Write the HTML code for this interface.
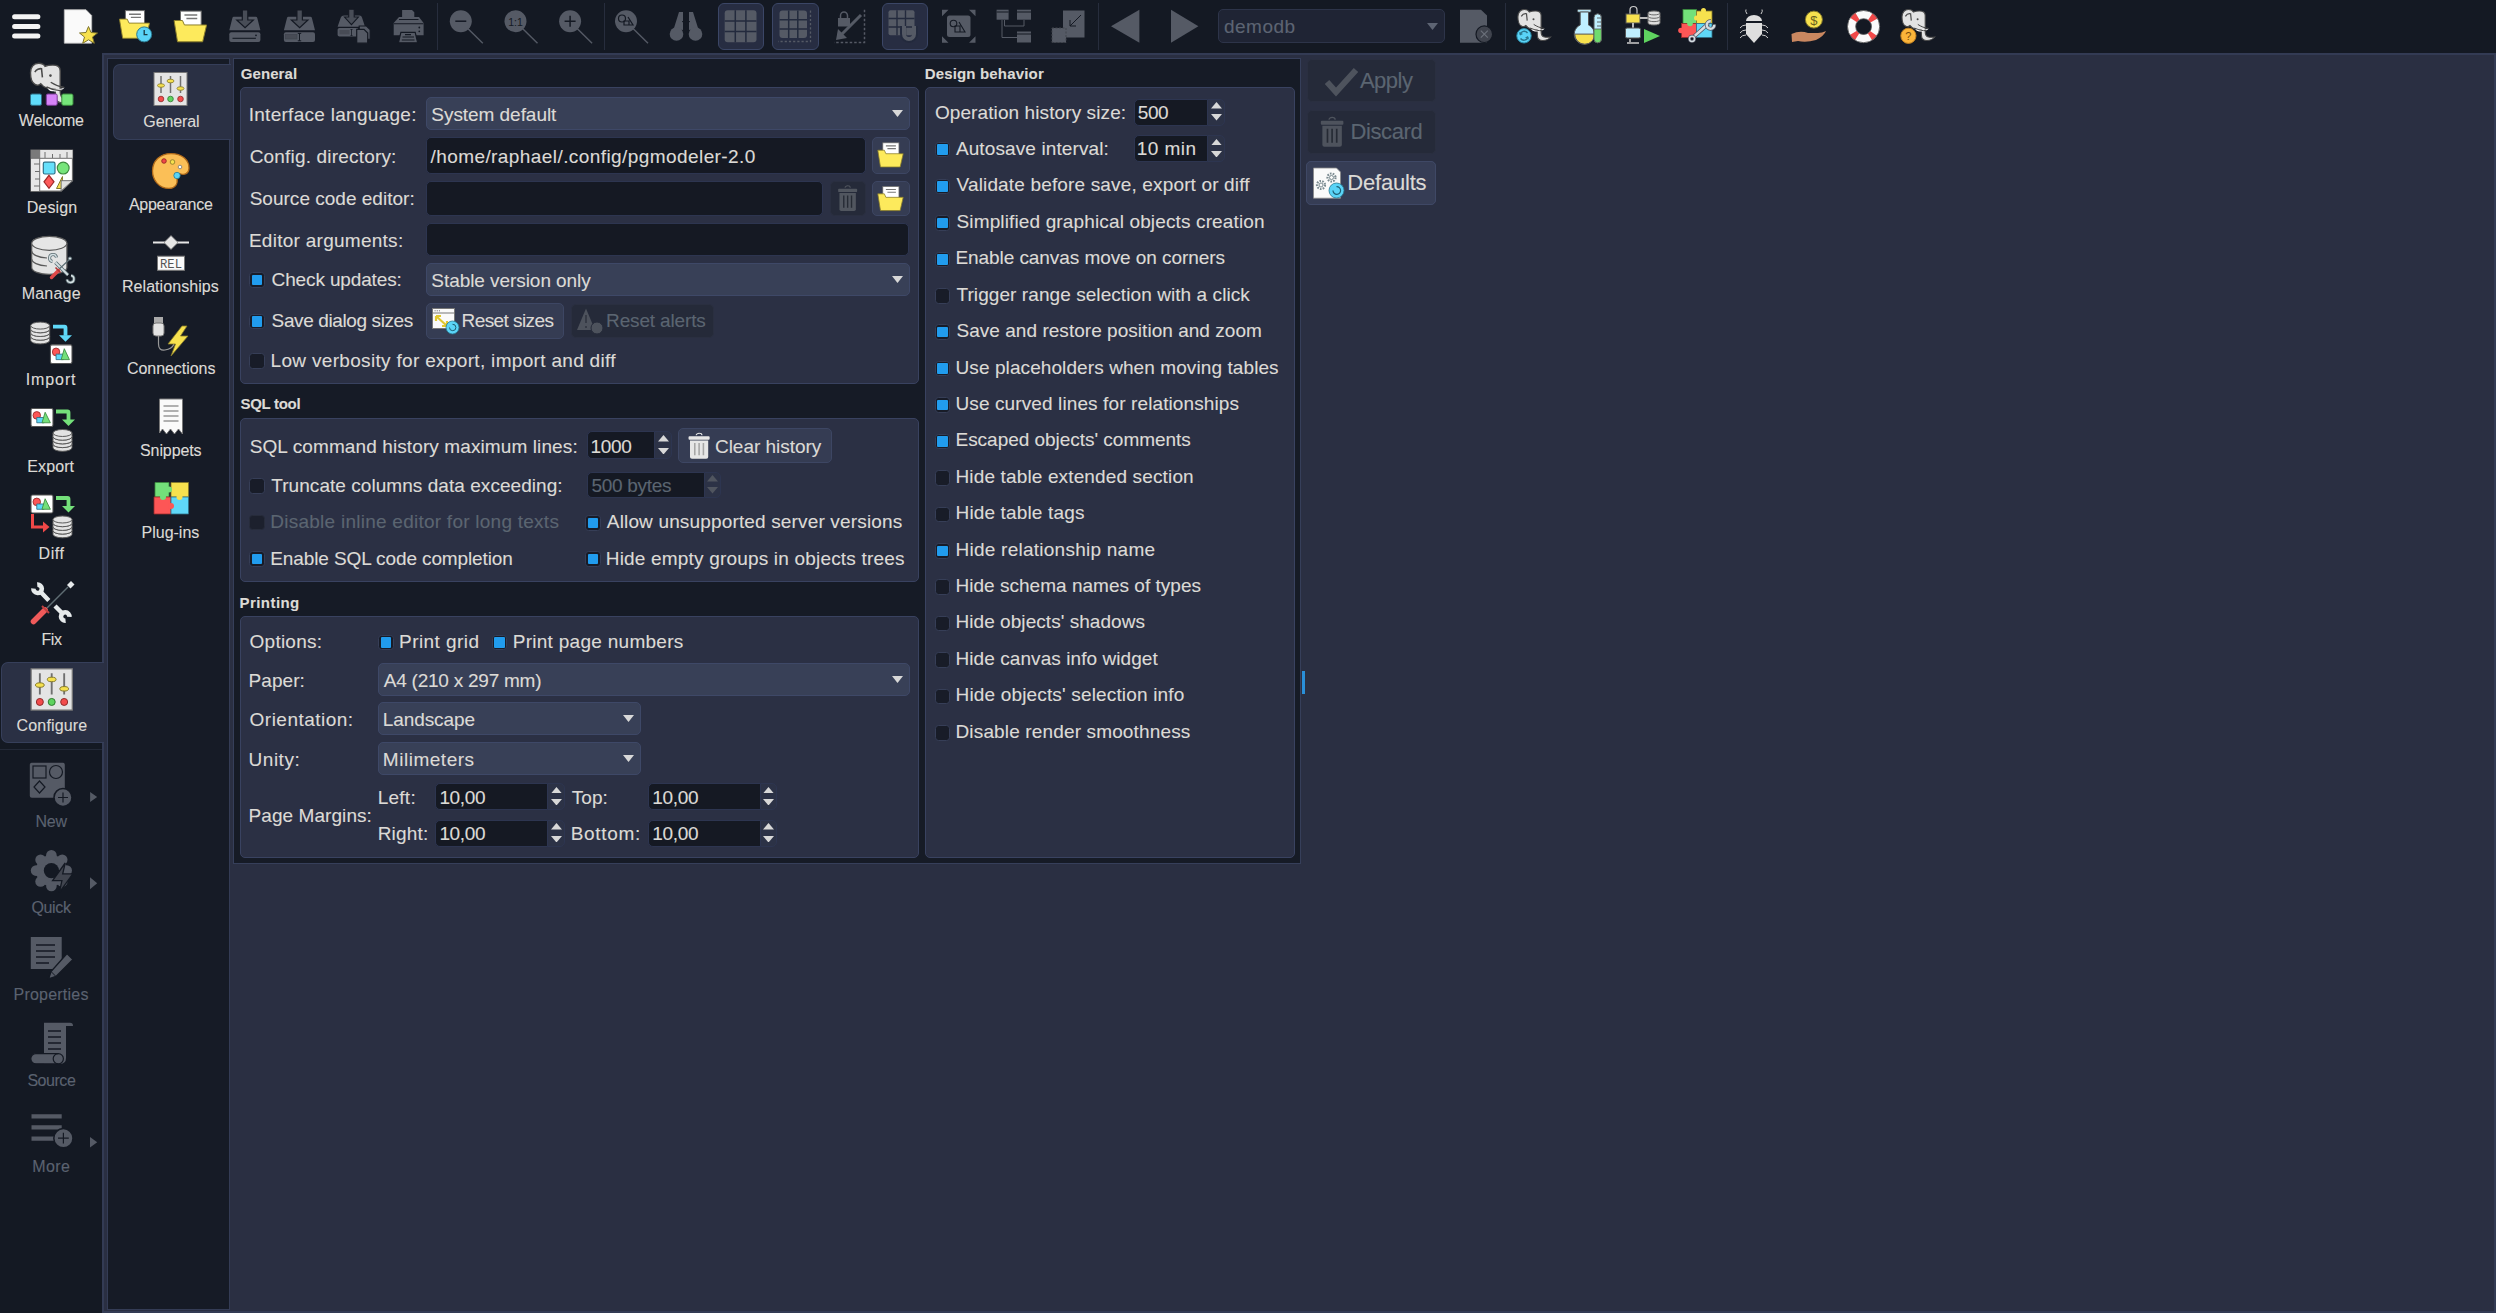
<!DOCTYPE html>
<html><head><meta charset="utf-8"><style>
html,body{margin:0;padding:0;width:2496px;height:1313px;overflow:hidden;background:#2a2f42;}
.a{position:absolute;}
.t{font-family:'Liberation Sans', sans-serif;white-space:nowrap;-webkit-text-stroke:0.12px currentColor;}
#t0{letter-spacing:0.156px;margin-left:0.00px}#t1{letter-spacing:0.138px;margin-left:0.00px}#t2{letter-spacing:-0.072px;margin-left:-1.00px}#t3{letter-spacing:0.073px;margin-left:0.00px}#t4{letter-spacing:0.035px;margin-left:0.00px}#t5{letter-spacing:0.091px;margin-left:-1.00px}#t6{letter-spacing:0.111px;margin-left:-1.00px}#t7{letter-spacing:-0.027px;margin-left:-1.00px}#t8{letter-spacing:0.141px;margin-left:-1.00px}#t9{letter-spacing:0.154px;margin-left:-1.00px}#t10{letter-spacing:0.249px;margin-left:-1.00px}#t11{letter-spacing:0.020px;margin-left:-1.00px}#t12{letter-spacing:0.052px;margin-left:-1.00px}#t13{letter-spacing:0.073px;margin-left:-1.00px}#t14{letter-spacing:0.163px;margin-left:-1.00px}#t15{letter-spacing:0.146px;margin-left:-1.00px}#t16{letter-spacing:0.481px;margin-left:0.00px}#t17{letter-spacing:0.101px;margin-left:0.00px}#t18{letter-spacing:-0.303px;margin-left:0.00px}#t19{letter-spacing:0.443px;margin-left:-1.00px}#t20{letter-spacing:0.167px;margin-left:-1.00px}#t21{letter-spacing:0.283px;margin-left:-1.00px}#t22{letter-spacing:-0.046px;margin-left:0.00px}#t23{letter-spacing:0.180px;margin-left:0.00px}#t24{letter-spacing:0.422px;margin-left:0.00px}#t25{letter-spacing:0.012px;margin-left:0.00px}#t26{letter-spacing:0.270px;margin-left:-1.00px}#t27{letter-spacing:-0.142px;margin-left:0.00px}#t28{letter-spacing:-0.058px;margin-left:0.00px}#t29{letter-spacing:-0.385px;margin-left:0.00px}#t30{letter-spacing:-0.590px;margin-left:-1.00px}#t31{letter-spacing:-0.152px;margin-left:-1.00px}#t32{letter-spacing:0.317px;margin-left:-1.00px}#t33{letter-spacing:0.105px;margin-left:0.00px}#t34{letter-spacing:-0.334px;margin-left:-1.00px}#t35{letter-spacing:-0.037px;margin-left:0.00px}#t36{letter-spacing:0.050px;margin-left:0.00px}#t37{letter-spacing:-0.312px;margin-left:0.00px}#t38{letter-spacing:0.249px;margin-left:-1.00px}#t39{letter-spacing:0.156px;margin-left:0.00px}#t40{letter-spacing:-0.113px;margin-left:-1.00px}#t41{letter-spacing:0.184px;margin-left:-1.00px}#t42{letter-spacing:0.232px;margin-left:0.00px}#t43{letter-spacing:0.427px;margin-left:-1.00px}#t44{letter-spacing:0.282px;margin-left:-1.00px}#t45{letter-spacing:0.060px;margin-left:-1.00px}#t46{letter-spacing:-0.240px;margin-left:0.00px}#t47{letter-spacing:0.478px;margin-left:0.00px}#t48{letter-spacing:-0.100px;margin-left:-1.00px}#t49{letter-spacing:0.502px;margin-left:-1.00px}#t50{letter-spacing:0.527px;margin-left:-1.00px}#t51{letter-spacing:0.064px;margin-left:-1.00px}#t52{letter-spacing:0.252px;margin-left:-1.00px}#t53{letter-spacing:-0.345px;margin-left:-1.00px}#t54{letter-spacing:0.089px;margin-left:0.00px}#t55{letter-spacing:-0.345px;margin-left:-1.00px}#t56{letter-spacing:0.189px;margin-left:-1.00px}#t57{letter-spacing:-0.345px;margin-left:-1.00px}#t58{letter-spacing:0.685px;margin-left:-1.00px}#t59{letter-spacing:-0.345px;margin-left:-1.00px}#t60{letter-spacing:0.098px;margin-left:0.00px}#t61{letter-spacing:-0.467px;margin-left:0.00px}#t62{letter-spacing:0.115px;margin-left:0.00px}#t63{letter-spacing:0.428px;margin-left:-1.00px}#t64{letter-spacing:-0.483px;margin-left:0.00px}#t65{letter-spacing:-0.406px;margin-left:-1.00px}#t66{letter-spacing:-0.201px;margin-left:-1.00px}#t67{letter-spacing:-0.215px;margin-left:0.00px}#t68{letter-spacing:0.119px;margin-left:-1.00px}#t69{letter-spacing:0.216px;margin-left:-1.00px}#t70{letter-spacing:0.880px;margin-left:-1.00px}#t71{letter-spacing:0.101px;margin-left:-1.00px}#t72{letter-spacing:0.578px;margin-left:-1.00px}#t73{letter-spacing:-0.414px;margin-left:-1.00px}#t74{letter-spacing:0.153px;margin-left:0.00px}#t75{letter-spacing:-0.227px;margin-left:-1.00px}#t76{letter-spacing:-0.350px;margin-left:0.00px}#t77{letter-spacing:0.209px;margin-left:-1.00px}#t78{letter-spacing:-0.459px;margin-left:0.00px}#t79{letter-spacing:0.382px;margin-left:-1.00px}#t80{letter-spacing:-0.111px;margin-left:0.00px}#t81{letter-spacing:-0.255px;margin-left:0.00px}#t82{letter-spacing:0.054px;margin-left:-1.00px}#t83{letter-spacing:-0.055px;margin-left:0.00px}#t84{letter-spacing:-0.095px;margin-left:0.00px}#t85{letter-spacing:-0.015px;margin-left:-1.00px}
</style></head><body>
<div class="a" style="left:0px;top:0px;width:2496px;height:53px;background:#141923;"></div>
<div class="a" style="left:0px;top:53px;width:102px;height:1260px;background:#141923;"></div>
<div class="a" style="left:102px;top:53px;width:2394px;height:1260px;background:#2a2f42;border:2px solid #333b54;box-sizing:border-box;"></div>
<div class="a" style="left:107px;top:58px;width:123px;height:1252px;background:#161b26;border:1px solid #343c55;box-sizing:border-box;"></div>
<div class="a" style="left:113px;top:64px;width:118px;height:76px;background:#2a3044;border:1px solid #353e59;box-sizing:border-box;border-radius:7px;border-top-right-radius:0;border-bottom-right-radius:0;border-right:none;"></div>
<div class="a" style="left:233px;top:58px;width:1068px;height:806px;background:#161b26;border:1px solid #363f5a;box-sizing:border-box;"></div>
<div class="a" style="left:240px;top:87px;width:679px;height:297px;background:#2b3044;border:1px solid #394260;box-sizing:border-box;border-radius:5px;"></div>
<div class="a" style="left:240px;top:418px;width:679px;height:164px;background:#2b3044;border:1px solid #394260;box-sizing:border-box;border-radius:5px;"></div>
<div class="a" style="left:240px;top:616px;width:679px;height:242px;background:#2b3044;border:1px solid #394260;box-sizing:border-box;border-radius:5px;"></div>
<div class="a" style="left:925px;top:87px;width:370px;height:771px;background:#2b3044;border:1px solid #394260;box-sizing:border-box;border-radius:5px;"></div>
<div class="a" style="left:1302px;top:671px;width:3px;height:23px;background:#2a8fd8;"></div>
<div class="a" style="left:426px;top:97px;width:484px;height:33px;background:#384057;border:1px solid #3e4867;box-sizing:border-box;border-radius:5px;"></div>
<svg class="a" style="left:891.5px;top:110.0px;" width="11" height="7" viewBox="0 0 11 7"><path d="M0 0H11L5.5 7Z" fill="#d8d8d8"/></svg>
<div class="a" style="left:426px;top:137px;width:440px;height:36.5px;background:#151923;border:1px solid #2d3550;box-sizing:border-box;border-radius:5px;"></div>
<div class="a" style="left:872px;top:137px;width:38px;height:36.5px;background:#353c53;border:1px solid #3d4663;box-sizing:border-box;border-radius:5px;"></div>
<div class="a" style="left:426px;top:180.5px;width:397px;height:35.80000000000001px;background:#151923;border:1px solid #2d3550;box-sizing:border-box;border-radius:5px;"></div>
<div class="a" style="left:830px;top:180.5px;width:35.5px;height:35.80000000000001px;background:#252a39;border:1px solid #2a2f40;box-sizing:border-box;border-radius:5px;"></div>
<div class="a" style="left:872px;top:180.5px;width:38px;height:35.80000000000001px;background:#353c53;border:1px solid #3d4663;box-sizing:border-box;border-radius:5px;"></div>
<div class="a" style="left:426px;top:223.4px;width:483px;height:32.99999999999997px;background:#151923;border:1px solid #2d3550;box-sizing:border-box;border-radius:5px;"></div>
<div class="a" style="left:426px;top:263px;width:484px;height:33.39999999999998px;background:#384057;border:1px solid #3e4867;box-sizing:border-box;border-radius:5px;"></div>
<svg class="a" style="left:891.5px;top:276.2px;" width="11" height="7" viewBox="0 0 11 7"><path d="M0 0H11L5.5 7Z" fill="#d8d8d8"/></svg>
<div class="a" style="left:426px;top:303px;width:138px;height:36px;background:#353c53;border:1px solid #3d4663;box-sizing:border-box;border-radius:5px;"></div>
<div class="a" style="left:571px;top:304px;width:143px;height:34px;background:#252a39;border:1px solid #2a2f40;box-sizing:border-box;border-radius:5px;"></div>
<div class="a" style="left:249.29999999999998px;top:272.1px;width:15.499999999999972px;height:15.5px;background:#181c28;border:1px solid #363e57;box-sizing:border-box;border-radius:3.5px;"></div>
<div class="a" style="left:251.79999999999998px;top:274.6px;width:10.499999999999972px;height:10.5px;background:#219cee;border-radius:1px;"></div>
<div class="a" style="left:249.29999999999998px;top:313.90000000000003px;width:15.499999999999972px;height:15.5px;background:#181c28;border:1px solid #363e57;box-sizing:border-box;border-radius:3.5px;"></div>
<div class="a" style="left:251.79999999999998px;top:316.40000000000003px;width:10.499999999999972px;height:10.5px;background:#219cee;border-radius:1px;"></div>
<div class="a" style="left:249.29999999999998px;top:353.40000000000003px;width:15.499999999999972px;height:15.5px;background:#181c28;border:1px solid #363e57;box-sizing:border-box;border-radius:3.5px;"></div>
<div class="a" style="left:586.6px;top:431.3px;width:85.10000000000002px;height:27.899999999999977px;background:#2c3246;border:1px solid #2d3550;box-sizing:border-box;border-radius:5px;"></div>
<div class="a" style="left:586.6px;top:431.3px;width:68.39999999999998px;height:27.899999999999977px;background:#151923;border:1px solid #2d3550;box-sizing:border-box;border-radius:5px;border-top-right-radius:0;border-bottom-right-radius:0;"></div>
<svg class="a" style="left:657.85px;top:435.25px;" width="11" height="6.5" viewBox="0 0 11 6.5"><path d="M0 6.5H11L5.5 0Z" fill="#d8d8d8"/></svg>
<svg class="a" style="left:657.85px;top:447.55px;" width="11" height="6.5" viewBox="0 0 11 6.5"><path d="M0 0H11L5.5 6.5Z" fill="#d8d8d8"/></svg>
<div class="a" style="left:678.2px;top:428.4px;width:154.29999999999995px;height:34.900000000000034px;background:#353c53;border:1px solid #3d4663;box-sizing:border-box;border-radius:5px;"></div>
<div class="a" style="left:587px;top:472.2px;width:133.70000000000005px;height:25.69999999999999px;background:#2c3246;border:1px solid #2d3550;box-sizing:border-box;border-radius:5px;"></div>
<div class="a" style="left:587px;top:472.2px;width:118px;height:25.69999999999999px;background:#151923;border:1px solid #2d3550;box-sizing:border-box;border-radius:5px;border-top-right-radius:0;border-bottom-right-radius:0;"></div>
<svg class="a" style="left:707.35px;top:475.04999999999995px;" width="11" height="6.5" viewBox="0 0 11 6.5"><path d="M0 6.5H11L5.5 0Z" fill="#50555f"/></svg>
<svg class="a" style="left:707.35px;top:487.34999999999997px;" width="11" height="6.5" viewBox="0 0 11 6.5"><path d="M0 0H11L5.5 6.5Z" fill="#50555f"/></svg>
<div class="a" style="left:249.39999999999998px;top:478.3px;width:15.5px;height:15.5px;background:#181c28;border:1px solid #363e57;box-sizing:border-box;border-radius:3.5px;"></div>
<div class="a" style="left:249.39999999999998px;top:514.8px;width:15.5px;height:15.5px;background:#1c202d;border:1px solid #272c3b;box-sizing:border-box;border-radius:3.5px;"></div>
<div class="a" style="left:249.39999999999998px;top:551.4px;width:15.5px;height:15.5px;background:#181c28;border:1px solid #363e57;box-sizing:border-box;border-radius:3.5px;"></div>
<div class="a" style="left:251.89999999999998px;top:553.9px;width:10.5px;height:10.5px;background:#219cee;border-radius:1px;"></div>
<div class="a" style="left:585.3000000000001px;top:515.0px;width:15.5px;height:15.5px;background:#181c28;border:1px solid #363e57;box-sizing:border-box;border-radius:3.5px;"></div>
<div class="a" style="left:587.8000000000001px;top:517.5px;width:10.5px;height:10.5px;background:#219cee;border-radius:1px;"></div>
<div class="a" style="left:585.3000000000001px;top:551.4px;width:15.5px;height:15.5px;background:#181c28;border:1px solid #363e57;box-sizing:border-box;border-radius:3.5px;"></div>
<div class="a" style="left:587.8000000000001px;top:553.9px;width:10.5px;height:10.5px;background:#219cee;border-radius:1px;"></div>
<div class="a" style="left:378.3px;top:634.5999999999999px;width:15.5px;height:15.5px;background:#181c28;border:1px solid #363e57;box-sizing:border-box;border-radius:3.5px;"></div>
<div class="a" style="left:380.8px;top:637.0999999999999px;width:10.5px;height:10.5px;background:#219cee;border-radius:1px;"></div>
<div class="a" style="left:491.9px;top:634.5999999999999px;width:15.5px;height:15.5px;background:#181c28;border:1px solid #363e57;box-sizing:border-box;border-radius:3.5px;"></div>
<div class="a" style="left:494.4px;top:637.0999999999999px;width:10.5px;height:10.5px;background:#219cee;border-radius:1px;"></div>
<div class="a" style="left:378px;top:662.5px;width:532px;height:33.299999999999955px;background:#384057;border:1px solid #3e4867;box-sizing:border-box;border-radius:5px;"></div>
<svg class="a" style="left:891.5px;top:675.65px;" width="11" height="7" viewBox="0 0 11 7"><path d="M0 0H11L5.5 7Z" fill="#d8d8d8"/></svg>
<div class="a" style="left:378px;top:702.2px;width:263px;height:33.299999999999955px;background:#384057;border:1px solid #3e4867;box-sizing:border-box;border-radius:5px;"></div>
<svg class="a" style="left:622.5px;top:715.35px;" width="11" height="7" viewBox="0 0 11 7"><path d="M0 0H11L5.5 7Z" fill="#d8d8d8"/></svg>
<div class="a" style="left:378px;top:742.2px;width:263px;height:33.299999999999955px;background:#384057;border:1px solid #3e4867;box-sizing:border-box;border-radius:5px;"></div>
<svg class="a" style="left:622.5px;top:755.35px;" width="11" height="7" viewBox="0 0 11 7"><path d="M0 0H11L5.5 7Z" fill="#d8d8d8"/></svg>
<div class="a" style="left:435px;top:783px;width:129.5px;height:27.299999999999955px;background:#2c3246;border:1px solid #2d3550;box-sizing:border-box;border-radius:5px;"></div>
<div class="a" style="left:435px;top:783px;width:112.60000000000002px;height:27.299999999999955px;background:#151923;border:1px solid #2d3550;box-sizing:border-box;border-radius:5px;border-top-right-radius:0;border-bottom-right-radius:0;"></div>
<svg class="a" style="left:550.55px;top:786.65px;" width="11" height="6.5" viewBox="0 0 11 6.5"><path d="M0 6.5H11L5.5 0Z" fill="#d8d8d8"/></svg>
<svg class="a" style="left:550.55px;top:798.9499999999999px;" width="11" height="6.5" viewBox="0 0 11 6.5"><path d="M0 0H11L5.5 6.5Z" fill="#d8d8d8"/></svg>
<div class="a" style="left:648px;top:783px;width:129px;height:27.299999999999955px;background:#2c3246;border:1px solid #2d3550;box-sizing:border-box;border-radius:5px;"></div>
<div class="a" style="left:648px;top:783px;width:112.5px;height:27.299999999999955px;background:#151923;border:1px solid #2d3550;box-sizing:border-box;border-radius:5px;border-top-right-radius:0;border-bottom-right-radius:0;"></div>
<svg class="a" style="left:763.25px;top:786.65px;" width="11" height="6.5" viewBox="0 0 11 6.5"><path d="M0 6.5H11L5.5 0Z" fill="#d8d8d8"/></svg>
<svg class="a" style="left:763.25px;top:798.9499999999999px;" width="11" height="6.5" viewBox="0 0 11 6.5"><path d="M0 0H11L5.5 6.5Z" fill="#d8d8d8"/></svg>
<div class="a" style="left:435px;top:819.6px;width:129.5px;height:27.399999999999977px;background:#2c3246;border:1px solid #2d3550;box-sizing:border-box;border-radius:5px;"></div>
<div class="a" style="left:435px;top:819.6px;width:112.60000000000002px;height:27.399999999999977px;background:#151923;border:1px solid #2d3550;box-sizing:border-box;border-radius:5px;border-top-right-radius:0;border-bottom-right-radius:0;"></div>
<svg class="a" style="left:550.55px;top:823.3px;" width="11" height="6.5" viewBox="0 0 11 6.5"><path d="M0 6.5H11L5.5 0Z" fill="#d8d8d8"/></svg>
<svg class="a" style="left:550.55px;top:835.5999999999999px;" width="11" height="6.5" viewBox="0 0 11 6.5"><path d="M0 0H11L5.5 6.5Z" fill="#d8d8d8"/></svg>
<div class="a" style="left:648px;top:819.6px;width:129px;height:27.399999999999977px;background:#2c3246;border:1px solid #2d3550;box-sizing:border-box;border-radius:5px;"></div>
<div class="a" style="left:648px;top:819.6px;width:112.5px;height:27.399999999999977px;background:#151923;border:1px solid #2d3550;box-sizing:border-box;border-radius:5px;border-top-right-radius:0;border-bottom-right-radius:0;"></div>
<svg class="a" style="left:763.25px;top:823.3px;" width="11" height="6.5" viewBox="0 0 11 6.5"><path d="M0 6.5H11L5.5 0Z" fill="#d8d8d8"/></svg>
<svg class="a" style="left:763.25px;top:835.5999999999999px;" width="11" height="6.5" viewBox="0 0 11 6.5"><path d="M0 0H11L5.5 6.5Z" fill="#d8d8d8"/></svg>
<div class="a" style="left:1133.7px;top:98.6px;width:91.39999999999986px;height:27.0px;background:#2c3246;border:1px solid #2d3550;box-sizing:border-box;border-radius:5px;"></div>
<div class="a" style="left:1133.7px;top:98.6px;width:74.70000000000005px;height:27.0px;background:#151923;border:1px solid #2d3550;box-sizing:border-box;border-radius:5px;border-top-right-radius:0;border-bottom-right-radius:0;"></div>
<svg class="a" style="left:1211.25px;top:102.1px;" width="11" height="6.5" viewBox="0 0 11 6.5"><path d="M0 6.5H11L5.5 0Z" fill="#d8d8d8"/></svg>
<svg class="a" style="left:1211.25px;top:114.39999999999999px;" width="11" height="6.5" viewBox="0 0 11 6.5"><path d="M0 0H11L5.5 6.5Z" fill="#d8d8d8"/></svg>
<div class="a" style="left:1133.7px;top:134.8px;width:91.39999999999986px;height:27.399999999999977px;background:#2c3246;border:1px solid #2d3550;box-sizing:border-box;border-radius:5px;"></div>
<div class="a" style="left:1133.7px;top:134.8px;width:74.70000000000005px;height:27.399999999999977px;background:#151923;border:1px solid #2d3550;box-sizing:border-box;border-radius:5px;border-top-right-radius:0;border-bottom-right-radius:0;"></div>
<svg class="a" style="left:1211.25px;top:138.5px;" width="11" height="6.5" viewBox="0 0 11 6.5"><path d="M0 6.5H11L5.5 0Z" fill="#d8d8d8"/></svg>
<svg class="a" style="left:1211.25px;top:150.8px;" width="11" height="6.5" viewBox="0 0 11 6.5"><path d="M0 0H11L5.5 6.5Z" fill="#d8d8d8"/></svg>
<div class="a" style="left:934.6px;top:141.8px;width:15.5px;height:15.5px;background:#181c28;border:1px solid #363e57;box-sizing:border-box;border-radius:3.5px;"></div>
<div class="a" style="left:937.1px;top:144.3px;width:10.5px;height:10.5px;background:#219cee;border-radius:1px;"></div>
<div class="a" style="left:934.7px;top:178.8px;width:15.5px;height:15.5px;background:#181c28;border:1px solid #363e57;box-sizing:border-box;border-radius:3.5px;"></div>
<div class="a" style="left:937.2px;top:181.3px;width:10.5px;height:10.5px;background:#219cee;border-radius:1px;"></div>
<div class="a t" id="t0" style="left:956.5px;top:175.4px;font-size:19px;line-height:19px;color:#dcdad6;">Validate before save, export or diff</div>
<div class="a" style="left:934.7px;top:215.22000000000003px;width:15.5px;height:15.5px;background:#181c28;border:1px solid #363e57;box-sizing:border-box;border-radius:3.5px;"></div>
<div class="a" style="left:937.2px;top:217.72000000000003px;width:10.5px;height:10.5px;background:#219cee;border-radius:1px;"></div>
<div class="a t" id="t1" style="left:956.5px;top:211.82px;font-size:19px;line-height:19px;color:#dcdad6;">Simplified graphical objects creation</div>
<div class="a" style="left:934.7px;top:251.64000000000001px;width:15.5px;height:15.499999999999972px;background:#181c28;border:1px solid #363e57;box-sizing:border-box;border-radius:3.5px;"></div>
<div class="a" style="left:937.2px;top:254.14000000000001px;width:10.5px;height:10.499999999999972px;background:#219cee;border-radius:1px;"></div>
<div class="a t" id="t2" style="left:956.5px;top:248.24px;font-size:19px;line-height:19px;color:#dcdad6;">Enable canvas move on corners</div>
<div class="a" style="left:934.7px;top:288.06px;width:15.5px;height:15.5px;background:#181c28;border:1px solid #363e57;box-sizing:border-box;border-radius:3.5px;"></div>
<div class="a t" id="t3" style="left:956.5px;top:284.66px;font-size:19px;line-height:19px;color:#dcdad6;">Trigger range selection with a click</div>
<div class="a" style="left:934.7px;top:324.48px;width:15.5px;height:15.5px;background:#181c28;border:1px solid #363e57;box-sizing:border-box;border-radius:3.5px;"></div>
<div class="a" style="left:937.2px;top:326.98px;width:10.5px;height:10.5px;background:#219cee;border-radius:1px;"></div>
<div class="a t" id="t4" style="left:956.5px;top:321.08000000000004px;font-size:19px;line-height:19px;color:#dcdad6;">Save and restore position and zoom</div>
<div class="a" style="left:934.7px;top:360.90000000000003px;width:15.5px;height:15.5px;background:#181c28;border:1px solid #363e57;box-sizing:border-box;border-radius:3.5px;"></div>
<div class="a" style="left:937.2px;top:363.40000000000003px;width:10.5px;height:10.5px;background:#219cee;border-radius:1px;"></div>
<div class="a t" id="t5" style="left:956.5px;top:357.5px;font-size:19px;line-height:19px;color:#dcdad6;">Use placeholders when moving tables</div>
<div class="a" style="left:934.7px;top:397.32px;width:15.5px;height:15.5px;background:#181c28;border:1px solid #363e57;box-sizing:border-box;border-radius:3.5px;"></div>
<div class="a" style="left:937.2px;top:399.82px;width:10.5px;height:10.5px;background:#219cee;border-radius:1px;"></div>
<div class="a t" id="t6" style="left:956.5px;top:393.92px;font-size:19px;line-height:19px;color:#dcdad6;">Use curved lines for relationships</div>
<div class="a" style="left:934.7px;top:433.74px;width:15.5px;height:15.5px;background:#181c28;border:1px solid #363e57;box-sizing:border-box;border-radius:3.5px;"></div>
<div class="a" style="left:937.2px;top:436.24px;width:10.5px;height:10.5px;background:#219cee;border-radius:1px;"></div>
<div class="a t" id="t7" style="left:956.5px;top:430.34000000000003px;font-size:19px;line-height:19px;color:#dcdad6;">Escaped objects&#39; comments</div>
<div class="a" style="left:934.7px;top:470.16px;width:15.5px;height:15.5px;background:#181c28;border:1px solid #363e57;box-sizing:border-box;border-radius:3.5px;"></div>
<div class="a t" id="t8" style="left:956.5px;top:466.76px;font-size:19px;line-height:19px;color:#dcdad6;">Hide table extended section</div>
<div class="a" style="left:934.7px;top:506.58000000000004px;width:15.5px;height:15.5px;background:#181c28;border:1px solid #363e57;box-sizing:border-box;border-radius:3.5px;"></div>
<div class="a t" id="t9" style="left:956.5px;top:503.18000000000006px;font-size:19px;line-height:19px;color:#dcdad6;">Hide table tags</div>
<div class="a" style="left:934.7px;top:543.0px;width:15.5px;height:15.5px;background:#181c28;border:1px solid #363e57;box-sizing:border-box;border-radius:3.5px;"></div>
<div class="a" style="left:937.2px;top:545.5px;width:10.5px;height:10.5px;background:#219cee;border-radius:1px;"></div>
<div class="a t" id="t10" style="left:956.5px;top:539.6px;font-size:19px;line-height:19px;color:#dcdad6;">Hide relationship name</div>
<div class="a" style="left:934.7px;top:579.42px;width:15.5px;height:15.5px;background:#181c28;border:1px solid #363e57;box-sizing:border-box;border-radius:3.5px;"></div>
<div class="a t" id="t11" style="left:956.5px;top:576.02px;font-size:19px;line-height:19px;color:#dcdad6;">Hide schema names of types</div>
<div class="a" style="left:934.7px;top:615.8399999999999px;width:15.5px;height:15.5px;background:#181c28;border:1px solid #363e57;box-sizing:border-box;border-radius:3.5px;"></div>
<div class="a t" id="t12" style="left:956.5px;top:612.44px;font-size:19px;line-height:19px;color:#dcdad6;">Hide objects&#39; shadows</div>
<div class="a" style="left:934.7px;top:652.26px;width:15.5px;height:15.5px;background:#181c28;border:1px solid #363e57;box-sizing:border-box;border-radius:3.5px;"></div>
<div class="a t" id="t13" style="left:956.5px;top:648.86px;font-size:19px;line-height:19px;color:#dcdad6;">Hide canvas info widget</div>
<div class="a" style="left:934.7px;top:688.68px;width:15.5px;height:15.5px;background:#181c28;border:1px solid #363e57;box-sizing:border-box;border-radius:3.5px;"></div>
<div class="a t" id="t14" style="left:956.5px;top:685.28px;font-size:19px;line-height:19px;color:#dcdad6;">Hide objects&#39; selection info</div>
<div class="a" style="left:934.7px;top:725.1px;width:15.5px;height:15.5px;background:#181c28;border:1px solid #363e57;box-sizing:border-box;border-radius:3.5px;"></div>
<div class="a t" id="t15" style="left:956.5px;top:721.7px;font-size:19px;line-height:19px;color:#dcdad6;">Disable render smoothness</div>
<div class="a" style="left:1217.6px;top:9.2px;width:227.10000000000014px;height:34.0px;background:#1f2434;border:1px solid #2d3449;box-sizing:border-box;border-radius:5px;"></div>
<svg class="a" style="left:1426.5px;top:22.6px;" width="11" height="7" viewBox="0 0 11 7"><path d="M0 0H11L5.5 7Z" fill="#5d6473"/></svg>
<div class="a t" id="t16" style="left:1224px;top:17.1px;font-size:19px;line-height:19px;color:#5d6473;">demodb</div>
<div class="a" style="left:718.2px;top:3.2px;width:45.799999999999955px;height:46.5px;background:#272d42;border:1px solid #3b4666;box-sizing:border-box;border-radius:6px;"></div>
<div class="a" style="left:772.3px;top:3.2px;width:46.40000000000009px;height:46.5px;background:#272d42;border:1px solid #3b4666;box-sizing:border-box;border-radius:6px;"></div>
<div class="a" style="left:882px;top:3.2px;width:45.89999999999998px;height:46.5px;background:#272d42;border:1px solid #3b4666;box-sizing:border-box;border-radius:6px;"></div>
<div class="a" style="left:437px;top:3px;width:1px;height:47px;background:#272d3d;"></div>
<div class="a" style="left:603.5px;top:3px;width:1.0px;height:47px;background:#272d3d;"></div>
<div class="a" style="left:1097.5px;top:3px;width:1.0px;height:47px;background:#272d3d;"></div>
<div class="a" style="left:1505.3px;top:3px;width:1.0px;height:47px;background:#272d3d;"></div>
<div class="a" style="left:1726.9px;top:3px;width:1.0px;height:47px;background:#272d3d;"></div>
<div class="a" style="left:1307px;top:59px;width:129px;height:43.400000000000006px;background:#252a39;border:1px solid #2a2f40;box-sizing:border-box;border-radius:5px;"></div>
<div class="a" style="left:1307px;top:110.2px;width:129px;height:43.39999999999999px;background:#252a39;border:1px solid #2a2f40;box-sizing:border-box;border-radius:5px;"></div>
<div class="a" style="left:1306.2px;top:160.7px;width:130.0999999999999px;height:44.60000000000002px;background:#353c53;border:1px solid #3d4663;box-sizing:border-box;border-radius:5px;"></div>
<div class="a" style="left:1306.2px;top:160.7px;width:130.0999999999999px;height:44.60000000000002px;background:#363d55;border:1px solid #3f4865;box-sizing:border-box;border-radius:5px;"></div>
<div class="a" style="left:1px;top:661.6px;width:103px;height:81.69999999999993px;background:#2a3044;border:1px solid #363f5a;box-sizing:border-box;border-radius:7px;border-top-right-radius:0;border-bottom-right-radius:0;border-right:none;"></div>
<div class="a" style="left:0px;top:748.5px;width:102px;height:1.2999999999999545px;background:#232937;"></div>
<div class="a t" id="t17" style="left:240.7px;top:66px;font-size:15px;line-height:15px;color:#dcdad6;font-weight:bold;">General</div>
<div class="a t" id="t18" style="left:240.5px;top:396.3px;font-size:15px;line-height:15px;color:#dcdad6;font-weight:bold;">SQL tool</div>
<div class="a t" id="t19" style="left:240.5px;top:595px;font-size:15px;line-height:15px;color:#dcdad6;font-weight:bold;">Printing</div>
<div class="a t" id="t20" style="left:925.7px;top:66px;font-size:15px;line-height:15px;color:#dcdad6;font-weight:bold;">Design behavior</div>
<div class="a t" id="t21" style="left:249.7px;top:105.2px;font-size:19px;line-height:19px;color:#dcdad6;">Interface language:</div>
<div class="a t" id="t22" style="left:431.3px;top:105.2px;font-size:19px;line-height:19px;color:#dcdad6;">System default</div>
<div class="a t" id="t23" style="left:249.7px;top:146.5px;font-size:19px;line-height:19px;color:#dcdad6;">Config. directory:</div>
<div class="a t" id="t24" style="left:430.5px;top:146.5px;font-size:19px;line-height:19px;color:#dcdad6;">/home/raphael/.config/pgmodeler-2.0</div>
<div class="a t" id="t25" style="left:249.7px;top:189.1px;font-size:19px;line-height:19px;color:#dcdad6;">Source code editor:</div>
<div class="a t" id="t26" style="left:249.9px;top:231px;font-size:19px;line-height:19px;color:#dcdad6;">Editor arguments:</div>
<div class="a t" id="t27" style="left:271.6px;top:270px;font-size:19px;line-height:19px;color:#dcdad6;">Check updates:</div>
<div class="a t" id="t28" style="left:431.3px;top:270.5px;font-size:19px;line-height:19px;color:#dcdad6;">Stable version only</div>
<div class="a t" id="t29" style="left:271.6px;top:311px;font-size:19px;line-height:19px;color:#dcdad6;">Save dialog sizes</div>
<div class="a t" id="t30" style="left:462.6px;top:311.4px;font-size:19px;line-height:19px;color:#dcdad6;">Reset sizes</div>
<div class="a t" id="t31" style="left:607.1px;top:311.4px;font-size:19px;line-height:19px;color:#5b6571;">Reset alerts</div>
<div class="a t" id="t32" style="left:271.6px;top:351.2px;font-size:19px;line-height:19px;color:#dcdad6;">Low verbosity for export, import and diff</div>
<div class="a t" id="t33" style="left:249.7px;top:436.8px;font-size:19px;line-height:19px;color:#dcdad6;">SQL command history maximum lines:</div>
<div class="a t" id="t34" style="left:591.6px;top:437.2px;font-size:19px;line-height:19px;color:#dcdad6;">1000</div>
<div class="a t" id="t35" style="left:715px;top:437.2px;font-size:19px;line-height:19px;color:#dcdad6;">Clear history</div>
<div class="a t" id="t36" style="left:271.3px;top:476.2px;font-size:19px;line-height:19px;color:#dcdad6;">Truncate columns data exceeding:</div>
<div class="a t" id="t37" style="left:591.6px;top:476.1px;font-size:19px;line-height:19px;color:#5b6571;">500 bytes</div>
<div class="a t" id="t38" style="left:271.3px;top:512.3px;font-size:19px;line-height:19px;color:#5b6571;">Disable inline editor for long texts</div>
<div class="a t" id="t39" style="left:606.8px;top:512.2px;font-size:19px;line-height:19px;color:#dcdad6;">Allow unsupported server versions</div>
<div class="a t" id="t40" style="left:271.3px;top:549px;font-size:19px;line-height:19px;color:#dcdad6;">Enable SQL code completion</div>
<div class="a t" id="t41" style="left:606.8px;top:548.7px;font-size:19px;line-height:19px;color:#dcdad6;">Hide empty groups in objects trees</div>
<div class="a t" id="t42" style="left:249.6px;top:632.1px;font-size:19px;line-height:19px;color:#dcdad6;">Options:</div>
<div class="a t" id="t43" style="left:400.1px;top:632.1px;font-size:19px;line-height:19px;color:#dcdad6;">Print grid</div>
<div class="a t" id="t44" style="left:513.7px;top:632.1px;font-size:19px;line-height:19px;color:#dcdad6;">Print page numbers</div>
<div class="a t" id="t45" style="left:249.6px;top:670.7px;font-size:19px;line-height:19px;color:#dcdad6;">Paper:</div>
<div class="a t" id="t46" style="left:383.8px;top:670.7px;font-size:19px;line-height:19px;color:#dcdad6;">A4 (210 x 297 mm)</div>
<div class="a t" id="t47" style="left:249.6px;top:710.1px;font-size:19px;line-height:19px;color:#dcdad6;">Orientation:</div>
<div class="a t" id="t48" style="left:383.8px;top:710.1px;font-size:19px;line-height:19px;color:#dcdad6;">Landscape</div>
<div class="a t" id="t49" style="left:249.6px;top:750.2px;font-size:19px;line-height:19px;color:#dcdad6;">Unity:</div>
<div class="a t" id="t50" style="left:383.8px;top:750.2px;font-size:19px;line-height:19px;color:#dcdad6;">Milimeters</div>
<div class="a t" id="t51" style="left:249.6px;top:806.1px;font-size:19px;line-height:19px;color:#dcdad6;">Page Margins:</div>
<div class="a t" id="t52" style="left:378.7px;top:788.4px;font-size:19px;line-height:19px;color:#dcdad6;">Left:</div>
<div class="a t" id="t53" style="left:440.4px;top:788.4px;font-size:19px;line-height:19px;color:#dcdad6;">10,00</div>
<div class="a t" id="t54" style="left:571.7px;top:788.4px;font-size:19px;line-height:19px;color:#dcdad6;">Top:</div>
<div class="a t" id="t55" style="left:653.3px;top:788.4px;font-size:19px;line-height:19px;color:#dcdad6;">10,00</div>
<div class="a t" id="t56" style="left:378.7px;top:824.3px;font-size:19px;line-height:19px;color:#dcdad6;">Right:</div>
<div class="a t" id="t57" style="left:440.4px;top:824.3px;font-size:19px;line-height:19px;color:#dcdad6;">10,00</div>
<div class="a t" id="t58" style="left:571.7px;top:824.3px;font-size:19px;line-height:19px;color:#dcdad6;">Bottom:</div>
<div class="a t" id="t59" style="left:653.3px;top:824.3px;font-size:19px;line-height:19px;color:#dcdad6;">10,00</div>
<div class="a t" id="t60" style="left:934.9px;top:102.8px;font-size:19px;line-height:19px;color:#dcdad6;">Operation history size:</div>
<div class="a t" id="t61" style="left:1137.8px;top:102.8px;font-size:19px;line-height:19px;color:#dcdad6;">500</div>
<div class="a t" id="t62" style="left:955.9px;top:139.4px;font-size:19px;line-height:19px;color:#dcdad6;">Autosave interval:</div>
<div class="a t" id="t63" style="left:1137.8px;top:139.4px;font-size:19px;line-height:19px;color:#dcdad6;">10 min</div>
<div class="a t" id="t64" style="left:1359.9px;top:69.8px;font-size:22px;line-height:22px;color:#5b6571;">Apply</div>
<div class="a t" id="t65" style="left:1351.5px;top:120.6px;font-size:22px;line-height:22px;color:#5b6571;">Discard</div>
<div class="a t" id="t66" style="left:1348.3px;top:171.5px;font-size:22px;line-height:22px;color:#dcdad6;">Defaults</div>
<div class="a t" id="t67" style="left:18.8px;top:113.2px;font-size:16px;line-height:16px;color:#dcdad6;">Welcome</div>
<div class="a t" id="t68" style="left:27.7px;top:199.6px;font-size:16px;line-height:16px;color:#dcdad6;">Design</div>
<div class="a t" id="t69" style="left:22.7px;top:285.8px;font-size:16px;line-height:16px;color:#dcdad6;">Manage</div>
<div class="a t" id="t70" style="left:26.8px;top:372.3px;font-size:16px;line-height:16px;color:#dcdad6;">Import</div>
<div class="a t" id="t71" style="left:28.3px;top:459.1px;font-size:16px;line-height:16px;color:#dcdad6;">Export</div>
<div class="a t" id="t72" style="left:39.6px;top:545.5px;font-size:16px;line-height:16px;color:#dcdad6;">Diff</div>
<div class="a t" id="t73" style="left:42.4px;top:632px;font-size:16px;line-height:16px;color:#dcdad6;">Fix</div>
<div class="a t" id="t74" style="left:16.6px;top:718.2px;font-size:16px;line-height:16px;color:#dcdad6;">Configure</div>
<div class="a t" id="t75" style="left:36.4px;top:813.5px;font-size:16px;line-height:16px;color:#5b6270;">New</div>
<div class="a t" id="t76" style="left:31.4px;top:900.2px;font-size:16px;line-height:16px;color:#5b6270;">Quick</div>
<div class="a t" id="t77" style="left:14.6px;top:986.8px;font-size:16px;line-height:16px;color:#5b6270;">Properties</div>
<div class="a t" id="t78" style="left:27.4px;top:1072.8px;font-size:16px;line-height:16px;color:#5b6270;">Source</div>
<div class="a t" id="t79" style="left:33.3px;top:1159.4px;font-size:16px;line-height:16px;color:#5b6270;">More</div>
<div class="a t" id="t80" style="left:143.3px;top:114.3px;font-size:16px;line-height:16px;color:#dcdad6;">General</div>
<div class="a t" id="t81" style="left:128.9px;top:196.7px;font-size:16px;line-height:16px;color:#dcdad6;">Appearance</div>
<div class="a t" id="t82" style="left:123px;top:278.6px;font-size:16px;line-height:16px;color:#dcdad6;">Relationships</div>
<div class="a t" id="t83" style="left:127px;top:360.6px;font-size:16px;line-height:16px;color:#dcdad6;">Connections</div>
<div class="a t" id="t84" style="left:140px;top:442.6px;font-size:16px;line-height:16px;color:#dcdad6;">Snippets</div>
<div class="a t" id="t85" style="left:142.6px;top:524.5px;font-size:16px;line-height:16px;color:#dcdad6;">Plug-ins</div>
<svg class="a" style="left:0;top:0" width="2496" height="1313" viewBox="0 0 2496 1313"><path d="M14.6,16.7H37.9M14.6,26.4H37.9M14.6,36.1H37.9" stroke="#f4f4f4" stroke-width="5" stroke-linecap="round"/><path d="M64.3,9.7 H86 L91.7,15.5 V43.2 H64.3 Z" fill="#fafafa" stroke="#bbb" stroke-width="0.8"/><path d="M88.5,26.5 L91,32.5 L97.5,33 L92.5,37 L94.3,43.3 L88.5,39.8 L82.7,43.3 L84.5,37 L79.5,33 L86,32.5 Z" fill="#f7e14e" stroke="#7f742a" stroke-width="1"/><g transform="translate(119,10.2) scale(0.9117647058823529,0.890625)"><rect x="7" y="0.5" width="21" height="16" fill="#fff" stroke="#6a6a6a" stroke-width="1"/><path d="M11,4.5H24M13,8H24" stroke="#777" stroke-width="1.5"/><path d="M0.5,10 L9,10 L11,14.5 L33.5,14.5 L29.5,31.5 L4,31.5 Z" fill="#fdea5c" stroke="#8a7d2a" stroke-width="1"/></g><circle cx="144.2" cy="34.4" r="7.5" fill="#5ad4f7" stroke="#2a7890" stroke-width="1"/><path d="M144.2,30V34.6H147.5" fill="none" stroke="#1a3a44" stroke-width="1.3"/><g transform="translate(173.6,10.6) scale(0.9852941176470589,0.990625)"><rect x="7" y="0.5" width="21" height="16" fill="#fff" stroke="#6a6a6a" stroke-width="1"/><path d="M11,4.5H24M13,8H24" stroke="#777" stroke-width="1.5"/><path d="M0.5,10 L9,10 L11,14.5 L33.5,14.5 L29.5,31.5 L4,31.5 Z" fill="#fdea5c" stroke="#8a7d2a" stroke-width="1"/></g><path d="M233.8,16.7 H255.8 Q257.0,16.7 257.3,18 L260.40000000000003,30.2 H229.3 L232.4,18 Q232.70000000000002,16.7 233.8,16.7 Z" fill="#555a65"/><rect x="229.3" y="32.3" width="31.1" height="9.7" rx="2" fill="#555a65"/><path d="M242.3,10 H247.8 V20 H253.3 L245.05,27.7 L236.8,20 H242.3 Z" fill="#484d57" stroke="#141923" stroke-width="1.2"/><path d="M288.4,16.7 H310.4 Q311.59999999999997,16.7 311.9,18 L315.0,30.2 H283.9 L287.0,18 Q287.29999999999995,16.7 288.4,16.7 Z" fill="#555a65"/><rect x="283.9" y="32.3" width="31.1" height="9.7" rx="2" fill="#555a65"/><path d="M296.9,10 H302.4 V20 H307.9 L299.65,27.7 L291.4,20 H296.9 Z" fill="#484d57" stroke="#141923" stroke-width="1.2"/><path d="M232.5,38.3H256" stroke="#141923" stroke-width="1.1"/><circle cx="256" cy="35.3" r="0.9" fill="#141923"/><rect x="285.2" y="34.4" width="11.8" height="4.6" fill="#474b55" stroke="#3f434c" stroke-width="0.6"/><path d="M299.5,33.4V40.8M297.8,33.4H301.2M297.8,40.8H301.2" stroke="#141923" stroke-width="1"/><path d="M344,15.5 H359.5 Q361.5,15.5 362,17.5 L365,26.8 H337.6 L340.8,17.5 Q341.5,15.5 344,15.5 Z" fill="#555a65"/><rect x="337.6" y="28" width="21" height="8.5" rx="1.8" fill="#555a65"/><rect x="339.5" y="30" width="10" height="4.3" fill="#474b55"/><path d="M351.5,29.5V35.5M350.5,29.5H352.5M350.5,35.5H352.5" stroke="#141923" stroke-width="0.8"/><path d="M348.7,9.2 H354.2 V17 H358.4 L351.45,24.7 L344.5,17 H348.7 Z" fill="#484d57" stroke="#141923" stroke-width="1.1"/><path d="M359.2,26 H366.5 L370.2,29.7 V39.4 H359.2 Z" fill="#555a65" stroke="#141923" stroke-width="1.2"/><path d="M356.7,29.3 H364 L367.7,33 V43.2 H356.7 Z" fill="#555a65" stroke="#141923" stroke-width="1.2"/><path d="M402.1,10 H412 L414.3,12.3 V19.7 H402.1 Z" fill="#555a65"/><path d="M399,17.1 H419 L423.6,23 V35.2 H393.7 V23 Z" fill="#555a65"/><path d="M394,23.8H423.3M399,19.5H418.5" stroke="#141923" stroke-width="1.1"/><circle cx="419.3" cy="27.5" r="0.9" fill="#141923"/><circle cx="419.3" cy="31.3" r="0.9" fill="#141923"/><path d="M400.9,32.3 H415.2 L417.7,42.8 H398.4 Z" fill="#555a65" stroke="#141923" stroke-width="1.2"/><path d="M405,34.6H411M402.5,37H414M401.8,40H414.5" stroke="#141923" stroke-width="1.1"/><path d="M467.8,28.5 L482.8,43.2" stroke="#555a65" stroke-width="1.4"/><circle cx="460.8" cy="21.2" r="11" fill="#555a65"/><path d="M455.3,21.2H466.3" stroke="#141923" stroke-width="1.5"/><path d="M522.5,28.5 L537.5,43.2" stroke="#555a65" stroke-width="1.4"/><circle cx="515.5" cy="21.2" r="11" fill="#555a65"/><text x="515.5" y="25.5" font-family="Liberation Sans" font-size="10.5" fill="#141923" text-anchor="middle">1:1</text><path d="M577.1,28.5 L592.1,43.2" stroke="#555a65" stroke-width="1.4"/><circle cx="570.1" cy="21.2" r="11" fill="#555a65"/><path d="M564.6,21.2H575.6M570.1,15.7V26.7" stroke="#141923" stroke-width="1.5"/><path d="M633,28.5 L648,43.2" stroke="#555a65" stroke-width="1.4"/><circle cx="626" cy="21.2" r="11" fill="#555a65"/><circle cx="622" cy="18.5" r="3.5" fill="none" stroke="#141923" stroke-width="1.2"/><path d="M624,21 H629 V25 H624 Z M628,17 L633,25 H628" fill="none" stroke="#141923" stroke-width="1.2"/><path d="M674,28 L679,12 H683 V30 Z M698,28 L693,12 H689 V30 Z" fill="#555a65"/><circle cx="676.5" cy="34" r="6.8" fill="#555a65"/><circle cx="695.5" cy="34" r="6.8" fill="#555a65"/><path d="M682,22 Q686,18 690,22" fill="none" stroke="#141923" stroke-width="1"/><rect x="724.7" y="10.2" width="31.8" height="32.1" rx="3" fill="#555a65"/><path d="M735.3,10.2V42.3M745.9,10.2V42.3M724.7,20.9H756.5M724.7,31.6H756.5" stroke="#232a3d" stroke-width="1.5"/><rect x="779.5" y="10.6" width="27.5" height="27.5" rx="3" fill="#555a65"/><path d="M788.7,10.6V38M797.8,10.6V38M779.5,19.8H807M779.5,29H807" stroke="#232a3d" stroke-width="1.5"/><path d="M810.5,10.5V41.5H778" fill="none" stroke="#555a65" stroke-width="1.3" stroke-dasharray="2.2,2"/><path d="M864.5,9.7V42.4H834" fill="none" stroke="#555a65" stroke-width="1.5" stroke-dasharray="2.5,2"/><path d="M861,15 L841,35" stroke="#555a65" stroke-width="3"/><path d="M836,40 L838,29 L847,38 Z" fill="#555a65"/><rect x="838" y="18" width="12" height="8.5" fill="#555a65"/><path d="M840.5,18V15.5A3.5,3.5 0 0 1 847.5,15.5V18" fill="none" stroke="#555a65" stroke-width="1.5"/><rect x="888.5" y="10.2" width="26" height="25" rx="2" fill="#555a65"/><path d="M897,10.2V35.2M905.5,10.2V35.2M888.5,18.5H914.5M888.5,27H914.5" stroke="#232a3d" stroke-width="1.4"/><path d="M903,26 V34 A6,6 0 0 0 915,34 V26" fill="none" stroke="#232a3d" stroke-width="6"/><path d="M904,26 V34 A5,5 0 0 0 914,34 V26" fill="none" stroke="#555a65" stroke-width="4"/><path d="M942,9.7 H948.5 L942,16.2 Z M975.5,9.7 H969 L975.5,16.2 Z M942,42.7 H948.5 L942,36.2 Z M975.5,42.7 H969 L975.5,36.2 Z" fill="#555a65"/><rect x="947" y="15.5" width="23.5" height="21.5" rx="2.5" fill="#555a65"/><circle cx="953.5" cy="23.5" r="3.3" fill="none" stroke="#141923" stroke-width="1.1"/><path d="M955,26H960V32H955ZM959,22L965,32H959" fill="none" stroke="#141923" stroke-width="1.1"/><rect x="996.6" y="9.7" width="12" height="10" fill="#555a65"/><rect x="1017" y="9.7" width="14" height="10" fill="#555a65"/><rect x="1017" y="31.5" width="14" height="11" fill="#555a65"/><path d="M1002,20 V37.5 H1017 M1004.5,20 V26 H1024 V20" fill="none" stroke="#555a65" stroke-width="1"/><path d="M996.6,12H1008.6M1017,12H1031M1017,34H1031" stroke="#141923" stroke-width="1"/><rect x="1063" y="10.5" width="21.5" height="27" fill="#555a65"/><rect x="1052" y="28" width="14" height="14.5" fill="#555a65" stroke="#40444d" stroke-width="1" stroke-dasharray="2,1.5"/><path d="M1081,15 L1070,26 M1070,20 V26 H1076" fill="none" stroke="#141923" stroke-width="1"/><path d="M1139.4,9.7 V42.7 L1111,26.2 Z" fill="#555a65"/><path d="M1171,9.7 V42.7 L1198.4,26.2 Z" fill="#555a65"/><path d="M1460,9.7 H1481 L1487,15.5 V42.7 H1460 Z" fill="#555a65"/><circle cx="1484.3" cy="34.2" r="8.3" fill="#40444e" stroke="#141923" stroke-width="1.2"/><path d="M1480.8,30.7L1487.8,37.7M1487.8,30.7L1480.8,37.7" stroke="#6b707a" stroke-width="1.2"/><g transform="translate(1517.9,9.5) scale(1.0)"><path d="M6.5,0 C2.5,0 0,3 0,7.5 C0,12 1.5,15.5 3.5,16.5 C5,17.5 7,17 8,16 L10,18 C12,19.5 15,20 19.3,20.5 L19.5,26 C19.5,29.5 22,31 25,31 C28,31 31,29.5 32.7,27.5 C30.5,27.8 28.5,28 26.5,27.5 C24,27 23.2,25 23.2,22 L23.2,6 C23.2,2.5 21,1.5 17.5,1.5 C14.5,1.5 12.5,2 11.4,2.5 C10.5,0.8 8.5,0 6.5,0 Z" fill="#e3e3e3" stroke="#4a4a4a" stroke-width="1.1"/><path d="M13,18.5 C17,20.5 22,21 26.6,19 C25.5,21 21,22.5 17,22 C15,21.7 13.5,20.5 13,18.5 Z" fill="#fff"/><path d="M15.8,14.9 C19,17 22.5,18.5 26.3,18.9 M12.5,18.5 C16,20.5 20.5,21.5 24.5,21" fill="none" stroke="#4a4a4a" stroke-width="1"/><path d="M3.4,6.9 C4.5,5 7,4 8.6,4.3 L9.3,11.1" fill="none" stroke="#4a4a4a" stroke-width="1.2"/><circle cx="15.6" cy="9.7" r="1" fill="#4a4a4a"/></g><circle cx="1524" cy="35.8" r="7.2" fill="#5ad4f7" stroke="#2a8aa8" stroke-width="1"/><path d="M1520,34.5 A4.2,4.2 0 0 1 1527.5,33 M1528,37 A4.2,4.2 0 0 1 1520.5,38.5" fill="none" stroke="#2a7890" stroke-width="1.4"/><path d="M1519,32 L1520,35.5 L1523,34Z M1529,39.5 L1528,36 L1525,37.5Z" fill="#2a7890"/><rect x="1577.5" y="9.6" width="13.5" height="2.5" rx="1" fill="#bfefff" stroke="#555" stroke-width="0.8"/><path d="M1580.2,12 H1588.5 V25 A10.1,10.1 0 1 1 1580.2,25 Z" fill="#bfefff" stroke="#555" stroke-width="1"/><path d="M1574.7,34.1 H1594.9 A10.1,10.1 0 0 1 1574.7,34.1 Z" fill="#f7e14e" stroke="#555" stroke-width="1"/><rect x="1594" y="13.8" width="7.4" height="29" rx="3.7" fill="#bfefff" stroke="#555" stroke-width="1"/><path d="M1594,29 H1601.4 V39.1 A3.7,3.7 0 0 1 1594,39.1 Z" fill="#6fdc6f" stroke="#555" stroke-width="0.8"/><path d="M1597,18H1601.4M1597,22H1601.4M1597,26H1601.4" stroke="#555" stroke-width="0.9"/><path d="M1630,15 V10 A3.5,3.5 0 0 1 1637,10 V15" fill="none" stroke="#ccc" stroke-width="1.2"/><rect x="1626" y="14" width="14" height="9" fill="#f7e14e" stroke="#555" stroke-width="1"/><path d="M1640,18H1648M1633,23V30" stroke="#bbb" stroke-width="2"/><path d="M1648,12.96 V23.04 A6.0,1.9600000000000002 0 0 0 1660,23.04 V12.96" fill="#dedede" stroke="#6a6a6a" stroke-width="1"/><ellipse cx="1654.0" cy="12.96" rx="6.0" ry="1.9600000000000002" fill="#dedede" stroke="#6a6a6a" stroke-width="1"/><path d="M1648,16.32 A6.0,1.9600000000000002 0 0 0 1660,16.32" fill="none" stroke="#6a6a6a" stroke-width="1"/><path d="M1648,19.68 A6.0,1.9600000000000002 0 0 0 1660,19.68" fill="none" stroke="#6a6a6a" stroke-width="1"/><rect x="1625.5" y="28" width="15" height="10" rx="1.5" fill="#bfefff" stroke="#555" stroke-width="1"/><path d="M1630,39V42M1627,43H1639" stroke="#ccc" stroke-width="1.5"/><path d="M1644,29 V43 L1660,36 Z" fill="#5fd35f"/><rect x="1683" y="9.5" width="13.5" height="14" fill="#73e07a" stroke="#3a8a3d" stroke-width="0.8"/><rect x="1696.5" y="11" width="15.5" height="12.5" fill="#f7e14e" stroke="#85792a" stroke-width="0.8"/><circle cx="1703.5" cy="10.5" r="2.5" fill="#f7e14e"/><rect x="1681.5" y="23.5" width="15" height="14" fill="#fd5656" stroke="#9a2a2a" stroke-width="0.8"/><circle cx="1681" cy="30.5" r="2.8" fill="#fd5656"/><rect x="1696.5" y="23.5" width="15.5" height="14" fill="#5fd8f8" stroke="#2f6f85" stroke-width="0.8"/><circle cx="1690" cy="23.5" r="2.8" fill="#73e07a"/><circle cx="1696.5" cy="18" r="2.5" fill="#f7e14e"/><path d="M1693.5,37 L1708.5,23.5" stroke="#556" stroke-width="4"/><path d="M1693.5,37 L1708.5,23.5" stroke="#d5dde0" stroke-width="2.4"/><circle cx="1692" cy="38.8" r="2.6" fill="none" stroke="#556" stroke-width="2.8"/><circle cx="1692" cy="38.8" r="2.6" fill="none" stroke="#d5dde0" stroke-width="1.5"/><path d="M1714.29,24.67 A3.8,3.8 0 1 1 1710.83,21.21" fill="none" stroke="#556" stroke-width="3.8"/><path d="M1714.29,24.67 A3.8,3.8 0 1 1 1710.83,21.21" fill="none" stroke="#d5dde0" stroke-width="2.4"/><path d="M1747,14 Q1745,11 1746,9.5 M1761,14 Q1763,11 1762,9.5" fill="none" stroke="#ccc" stroke-width="1"/><path d="M1746,21 A8,6 0 0 1 1762,21 Z" fill="#dedede"/><path d="M1746,23 H1762 V34 L1754,43 L1746,34 Z" fill="#dedede"/><path d="M1746,25 Q1742,25 1740,28 M1762,25 Q1766,25 1768,28 M1746,30 Q1742,30 1740,33 M1762,30 Q1766,30 1768,33 M1746,35 Q1742,35 1740,38 M1762,35 Q1766,35 1768,38" fill="none" stroke="#ccc" stroke-width="1"/><circle cx="1813.9" cy="19.6" r="8.5" fill="#f7e14e" stroke="#7f742a" stroke-width="1"/><text x="1813.9" y="24.5" font-family="Liberation Sans" font-size="13" fill="#6a5f20" text-anchor="middle">$</text><path d="M1791.5,34 Q1800,30 1808,33 L1818,33 Q1822,33 1826,31 Q1824,36 1816,40 Q1806,43 1798,41 L1792,42 Z" fill="#c98760"/><circle cx="1863.6" cy="26.6" r="12" fill="none" stroke="#fafafa" stroke-width="8.2"/><circle cx="1863.6" cy="26.6" r="12" fill="none" stroke="#f04848" stroke-width="8.2" stroke-dasharray="5.5,13.35" stroke-dashoffset="2.75" transform="rotate(45 1863.6 26.6)"/><circle cx="1863.6" cy="26.6" r="16.1" fill="none" stroke="#555" stroke-width="0.8"/><circle cx="1863.6" cy="26.6" r="7.9" fill="none" stroke="#555" stroke-width="0.8"/><g transform="translate(1902,9.5) scale(1.0)"><path d="M6.5,0 C2.5,0 0,3 0,7.5 C0,12 1.5,15.5 3.5,16.5 C5,17.5 7,17 8,16 L10,18 C12,19.5 15,20 19.3,20.5 L19.5,26 C19.5,29.5 22,31 25,31 C28,31 31,29.5 32.7,27.5 C30.5,27.8 28.5,28 26.5,27.5 C24,27 23.2,25 23.2,22 L23.2,6 C23.2,2.5 21,1.5 17.5,1.5 C14.5,1.5 12.5,2 11.4,2.5 C10.5,0.8 8.5,0 6.5,0 Z" fill="#e3e3e3" stroke="#4a4a4a" stroke-width="1.1"/><path d="M13,18.5 C17,20.5 22,21 26.6,19 C25.5,21 21,22.5 17,22 C15,21.7 13.5,20.5 13,18.5 Z" fill="#fff"/><path d="M15.8,14.9 C19,17 22.5,18.5 26.3,18.9 M12.5,18.5 C16,20.5 20.5,21.5 24.5,21" fill="none" stroke="#4a4a4a" stroke-width="1"/><path d="M3.4,6.9 C4.5,5 7,4 8.6,4.3 L9.3,11.1" fill="none" stroke="#4a4a4a" stroke-width="1.2"/><circle cx="15.6" cy="9.7" r="1" fill="#4a4a4a"/></g><circle cx="1908.4" cy="35.8" r="7.6" fill="#fbb43a" stroke="#c08020" stroke-width="1"/><text x="1908.4" y="40" font-family="Liberation Sans" font-size="11" fill="#7a4a0a" text-anchor="middle">?</text><g transform="translate(30.5,63.2) scale(1.28)"><path d="M6.5,0 C2.5,0 0,3 0,7.5 C0,12 1.5,15.5 3.5,16.5 C5,17.5 7,17 8,16 L10,18 C12,19.5 15,20 19.3,20.5 L19.5,26 C19.5,29.5 22,31 25,31 C28,31 31,29.5 32.7,27.5 C30.5,27.8 28.5,28 26.5,27.5 C24,27 23.2,25 23.2,22 L23.2,6 C23.2,2.5 21,1.5 17.5,1.5 C14.5,1.5 12.5,2 11.4,2.5 C10.5,0.8 8.5,0 6.5,0 Z" fill="#e3e3e3" stroke="#4a4a4a" stroke-width="1.1"/><path d="M13,18.5 C17,20.5 22,21 26.6,19 C25.5,21 21,22.5 17,22 C15,21.7 13.5,20.5 13,18.5 Z" fill="#fff"/><path d="M15.8,14.9 C19,17 22.5,18.5 26.3,18.9 M12.5,18.5 C16,20.5 20.5,21.5 24.5,21" fill="none" stroke="#4a4a4a" stroke-width="1"/><path d="M3.4,6.9 C4.5,5 7,4 8.6,4.3 L9.3,11.1" fill="none" stroke="#4a4a4a" stroke-width="1.2"/><circle cx="15.6" cy="9.7" r="1" fill="#4a4a4a"/></g><rect x="30.5" y="94" width="11" height="11.3" rx="1.5" fill="#5fdcfb" stroke="#2f6f85" stroke-width="1"/><rect x="46.3" y="94" width="10.9" height="11.3" rx="1.5" fill="#d683f8" stroke="#7a3a95" stroke-width="1"/><rect x="61.8" y="94" width="11.2" height="11.3" rx="1.5" fill="#76e57a" stroke="#3a8a3d" stroke-width="1"/><path d="M31,150 H72.5 V180.7 L61.1,191.1 H31 Z" fill="#fff" stroke="#6e6e6e" stroke-width="1.2"/><rect x="31" y="150" width="8.7" height="8.3" fill="#7a7a7a"/><rect x="39.7" y="150" width="32.8" height="8.3" fill="#e6e6e6"/><rect x="31" y="158.3" width="8.7" height="32.8" fill="#e6e6e6"/><path d="M39.7,150V191M31,158.3H72.5M45,152V158M52.5,154V158M60,154V158M67,152V158M34,164H39.7M35,171.5H39.7M35,179H39.7M34,186H39.7" stroke="#6e6e6e" stroke-width="1"/><rect x="43.3" y="162.2" width="11.7" height="11.8" rx="1.5" fill="#66e0fb" stroke="#2e7189" stroke-width="1.2"/><circle cx="63.2" cy="168.1" r="5.9" fill="#77e57b" stroke="#3d8c3f" stroke-width="1.2"/><path d="M49,175.3 L54,181.8 L49,188.3 L44,181.8 Z" fill="#fd5a5a" stroke="#a02828" stroke-width="1.2"/><path d="M62.5,176.5 L56.5,188.5 H62 Z" fill="#f7e14e" stroke="#85792a" stroke-width="1"/><path d="M61.1,191.1 V180.7 H72.5 Z" fill="#e0e0e0" stroke="#6e6e6e" stroke-width="1"/><path d="M31.7,243.3 V267.4 A17.6,7 0 0 0 66.9,267.4 V243.3" fill="#e3e3e3" stroke="#5a5a5a" stroke-width="1.2"/><ellipse cx="49.3" cy="243.3" rx="17.6" ry="7" fill="#e6e6e6" stroke="#5a5a5a" stroke-width="1.2"/><path d="M31.7,251 A17.6,7 0 0 0 47,258 M31.7,259 A17.6,7 0 0 0 47,266" fill="none" stroke="#5a5a5a" stroke-width="1.2"/><path d="M55.5,262.5 L68,275" stroke="#5c6d73" stroke-width="3.6"/><path d="M55.5,262.5 L68,275" stroke="#d5e0e3" stroke-width="1.8"/><path d="M56.5,257.5 A3.5,3.5 0 1 0 52.5,261.5" fill="none" stroke="#5c6d73" stroke-width="3"/><path d="M56.5,257.5 A3.5,3.5 0 1 0 52.5,261.5" fill="none" stroke="#d5e0e3" stroke-width="1.4"/><path d="M67,279.5 A3.5,3.5 0 1 0 71,275.5" fill="none" stroke="#5c6d73" stroke-width="3"/><path d="M67,279.5 A3.5,3.5 0 1 0 71,275.5" fill="none" stroke="#d5e0e3" stroke-width="1.4"/><path d="M70,259 L57,271" stroke="#5c6d73" stroke-width="1.2"/><circle cx="70" cy="258.5" r="1.6" fill="#d5e0e3" stroke="#5c6d73" stroke-width="0.8"/><path d="M58.5,270.5 L51.5,277.5" stroke="#e04848" stroke-width="3.4" stroke-linecap="round"/><path d="M55.5,267.5 L60.5,272.5" stroke="#b03535" stroke-width="1.6"/><path d="M30.7,336.706 V340.41200000000003 A9.5,3.488 0 0 0 49.7,340.41200000000003 V336.706" fill="#e3e3e3" stroke="#5a5a5a" stroke-width="1"/><ellipse cx="40.2" cy="336.706" rx="9.5" ry="3.488" fill="#e3e3e3" stroke="#5a5a5a" stroke-width="1"/><path d="M30.7,333.0 V336.706 A9.5,3.488 0 0 0 49.7,336.706 V333.0" fill="#e3e3e3" stroke="#5a5a5a" stroke-width="1"/><ellipse cx="40.2" cy="333.0" rx="9.5" ry="3.488" fill="#e3e3e3" stroke="#5a5a5a" stroke-width="1"/><path d="M30.7,329.29400000000004 V333.00000000000006 A9.5,3.488 0 0 0 49.7,333.00000000000006 V329.29400000000004" fill="#e3e3e3" stroke="#5a5a5a" stroke-width="1"/><ellipse cx="40.2" cy="329.29400000000004" rx="9.5" ry="3.488" fill="#e3e3e3" stroke="#5a5a5a" stroke-width="1"/><path d="M30.7,325.588 V329.29400000000004 A9.5,3.488 0 0 0 49.7,329.29400000000004 V325.588" fill="#e3e3e3" stroke="#5a5a5a" stroke-width="1"/><ellipse cx="40.2" cy="325.588" rx="9.5" ry="3.488" fill="#e3e3e3" stroke="#5a5a5a" stroke-width="1"/><path d="M53,326.6 H64.5 Q65.5,326.6 65.5,327.6 V335.8" fill="none" stroke="#5fd8f8" stroke-width="3.8" stroke-linejoin="round"/><path d="M59.0,335.3 L65.5,341.8 L72.0,335.3 Z" fill="#5fd8f8"/><g transform="translate(49.9,344.3) scale(1.0272727272727273,1.0944444444444443)"><rect x="0.5" y="0.5" width="21" height="17" rx="1.5" fill="#fff" stroke="#555" stroke-width="1"/><circle cx="6" cy="7" r="3.6" fill="#fd5656" stroke="#9a2a2a" stroke-width="0.8"/><path d="M6,9 H13 V14 H6 Z" fill="#5fd8f8" stroke="#2f6f85" stroke-width="0.8"/><path d="M14,4 L19,14 H11 Z" fill="#74e07a" stroke="#3a8a3d" stroke-width="0.8"/></g><g transform="translate(30.5,408) scale(1.0454545454545454,1.0555555555555556)"><rect x="0.5" y="0.5" width="21" height="17" rx="1.5" fill="#fff" stroke="#555" stroke-width="1"/><circle cx="6" cy="7" r="3.6" fill="#fd5656" stroke="#9a2a2a" stroke-width="0.8"/><path d="M6,9 H13 V14 H6 Z" fill="#5fd8f8" stroke="#2f6f85" stroke-width="0.8"/><path d="M14,4 L19,14 H11 Z" fill="#74e07a" stroke="#3a8a3d" stroke-width="0.8"/></g><path d="M56,411.5 H67.5 Q68.5,411.5 68.5,412.5 V420.0" fill="none" stroke="#74e07a" stroke-width="3.8" stroke-linejoin="round"/><path d="M62.0,419.5 L68.5,426.0 L75.0,419.5 Z" fill="#74e07a"/><path d="M53,444.106 V447.812 A9.5,3.488 0 0 0 72,447.812 V444.106" fill="#e3e3e3" stroke="#5a5a5a" stroke-width="1"/><ellipse cx="62.5" cy="444.106" rx="9.5" ry="3.488" fill="#e3e3e3" stroke="#5a5a5a" stroke-width="1"/><path d="M53,440.4 V444.106 A9.5,3.488 0 0 0 72,444.106 V440.4" fill="#e3e3e3" stroke="#5a5a5a" stroke-width="1"/><ellipse cx="62.5" cy="440.4" rx="9.5" ry="3.488" fill="#e3e3e3" stroke="#5a5a5a" stroke-width="1"/><path d="M53,436.694 V440.40000000000003 A9.5,3.488 0 0 0 72,440.40000000000003 V436.694" fill="#e3e3e3" stroke="#5a5a5a" stroke-width="1"/><ellipse cx="62.5" cy="436.694" rx="9.5" ry="3.488" fill="#e3e3e3" stroke="#5a5a5a" stroke-width="1"/><path d="M53,432.988 V436.694 A9.5,3.488 0 0 0 72,436.694 V432.988" fill="#e3e3e3" stroke="#5a5a5a" stroke-width="1"/><ellipse cx="62.5" cy="432.988" rx="9.5" ry="3.488" fill="#e3e3e3" stroke="#5a5a5a" stroke-width="1"/><g transform="translate(30.5,494.5) scale(1.0454545454545454,1.0555555555555556)"><rect x="0.5" y="0.5" width="21" height="17" rx="1.5" fill="#fff" stroke="#555" stroke-width="1"/><circle cx="6" cy="7" r="3.6" fill="#fd5656" stroke="#9a2a2a" stroke-width="0.8"/><path d="M6,9 H13 V14 H6 Z" fill="#5fd8f8" stroke="#2f6f85" stroke-width="0.8"/><path d="M14,4 L19,14 H11 Z" fill="#74e07a" stroke="#3a8a3d" stroke-width="0.8"/></g><path d="M56,498 H67.5 Q68.5,498 68.5,499 V506.5" fill="none" stroke="#74e07a" stroke-width="3.8" stroke-linejoin="round"/><path d="M62.0,506.0 L68.5,512.5 L75.0,506.0 Z" fill="#74e07a"/><path d="M53,530.6060000000001 V534.3120000000001 A9.5,3.488 0 0 0 72,534.3120000000001 V530.6060000000001" fill="#e3e3e3" stroke="#5a5a5a" stroke-width="1"/><ellipse cx="62.5" cy="530.6060000000001" rx="9.5" ry="3.488" fill="#e3e3e3" stroke="#5a5a5a" stroke-width="1"/><path d="M53,526.9000000000001 V530.6060000000001 A9.5,3.488 0 0 0 72,530.6060000000001 V526.9000000000001" fill="#e3e3e3" stroke="#5a5a5a" stroke-width="1"/><ellipse cx="62.5" cy="526.9000000000001" rx="9.5" ry="3.488" fill="#e3e3e3" stroke="#5a5a5a" stroke-width="1"/><path d="M53,523.1940000000001 V526.9000000000001 A9.5,3.488 0 0 0 72,526.9000000000001 V523.1940000000001" fill="#e3e3e3" stroke="#5a5a5a" stroke-width="1"/><ellipse cx="62.5" cy="523.1940000000001" rx="9.5" ry="3.488" fill="#e3e3e3" stroke="#5a5a5a" stroke-width="1"/><path d="M53,519.488 V523.1940000000001 A9.5,3.488 0 0 0 72,523.1940000000001 V519.488" fill="#e3e3e3" stroke="#5a5a5a" stroke-width="1"/><ellipse cx="62.5" cy="519.488" rx="9.5" ry="3.488" fill="#e3e3e3" stroke="#5a5a5a" stroke-width="1"/><path d="M32.5,514 V527 H44" fill="none" stroke="#f04848" stroke-width="3"/><path d="M43,521.5 L49.5,527 L43,532.5 Z" fill="#f04848"/><path d="M40.5,591.7 L48.8,600.5 M55,606 L62.5,613.5" stroke="#e6eaeb" stroke-width="4.4"/><path d="M37.23,584.62 A4.2,4.2 0 1 1 33.42,588.43" fill="none" stroke="#e6eaeb" stroke-width="4.6"/><path d="M65.57,620.68 A4.2,4.2 0 1 1 69.38,616.87" fill="none" stroke="#e6eaeb" stroke-width="4.6"/><path d="M68,587 L47,608" stroke="#5e6d73" stroke-width="1.4"/><path d="M67,585 L71,581 L74.5,584.5 L70.5,588.5 Z" fill="#e6eaeb"/><path d="M45,610 L33.5,621.5" stroke="#f05a5a" stroke-width="5.6" stroke-linecap="round"/><path d="M42,606 L49,613" stroke="#c04040" stroke-width="2"/><g transform="translate(30.5,668.2) scale(1.2470588235294118,1.25)"><rect x="0.5" y="0.5" width="33" height="33" fill="#e4e4e4" stroke="#777" stroke-width="1"/><path d="M7.5,4V21M17,4V21M27,4V21" stroke="#707070" stroke-width="1.5"/><ellipse cx="7.5" cy="13.5" rx="3.5" ry="1.8" fill="#f5e04e" stroke="#85792a" stroke-width="0.8"/><ellipse cx="17" cy="9" rx="3.5" ry="1.8" fill="#f5e04e" stroke="#85792a" stroke-width="0.8"/><ellipse cx="27" cy="16.5" rx="3.5" ry="1.8" fill="#f5e04e" stroke="#85792a" stroke-width="0.8"/><circle cx="7.5" cy="27" r="2.8" fill="#f24b4b" stroke="#8f2a2a" stroke-width="0.8"/><circle cx="17" cy="27" r="2.8" fill="#5fd35f" stroke="#2f7a2f" stroke-width="0.8"/><circle cx="27" cy="27" r="2.8" fill="#f24b4b" stroke="#8f2a2a" stroke-width="0.8"/></g><rect x="29.8" y="762.8" width="35" height="35" rx="2" fill="#555a65"/><rect x="33" y="766" width="13" height="12" fill="none" stroke="#141923" stroke-width="1.2"/><circle cx="56" cy="772" r="6.5" fill="none" stroke="#141923" stroke-width="1.2"/><path d="M39.5,781 L45,787 L39.5,793 L34,787 Z" fill="none" stroke="#141923" stroke-width="1.2"/><circle cx="63" cy="797.5" r="9" fill="#555a65" stroke="#141923" stroke-width="1.5"/><path d="M58,797.5H68M63,792.5V802.5" stroke="#141923" stroke-width="1.2"/><path d="M90.1,792 L97.2,797 L90.1,802 Z" fill="#555a65"/><path d="M90,877.3 L97.2,883.3 L90,889.3 Z" fill="#555a65"/><path d="M90,1137 L97.2,1142.3 L90,1147.6 Z" fill="#555a65"/><circle cx="51.4" cy="870.6" r="15.5" fill="#555a65"/><circle cx="66.70" cy="870.60" r="5.3" fill="#555a65"/><circle cx="62.22" cy="881.42" r="5.3" fill="#555a65"/><circle cx="51.40" cy="885.90" r="5.3" fill="#555a65"/><circle cx="40.58" cy="881.42" r="5.3" fill="#555a65"/><circle cx="36.10" cy="870.60" r="5.3" fill="#555a65"/><circle cx="40.58" cy="859.78" r="5.3" fill="#555a65"/><circle cx="51.40" cy="855.30" r="5.3" fill="#555a65"/><circle cx="62.22" cy="859.78" r="5.3" fill="#555a65"/><circle cx="51.4" cy="870.6" r="7.6" fill="#141923"/><path d="M65.2,863 L52.6,880.6 H61.9 L59.4,892.3 L72.8,873.9 H62.7 Z" fill="#41454f" stroke="#141923" stroke-width="1.3"/><rect x="30.8" y="937" width="30.9" height="32" fill="#555a65"/><path d="M36,945H55M36,951H55M36,957H55M36,963H49" stroke="#141923" stroke-width="1.6"/><path d="M67,953.5 L73,959.5 L56,976.5 L48.5,979 L51,971.5 Z" fill="#555a65" stroke="#141923" stroke-width="1.4"/><path d="M51,971.5 L56,976.5" stroke="#141923" stroke-width="1"/><path d="M44,1022.7 H70 Q73,1022.7 73,1026 H66 V1058 Q66,1063.8 60,1063.8 H44 Z" fill="#555a65"/><path d="M48,1031H61M48,1037H61M48,1043H61M48,1049H61" stroke="#141923" stroke-width="1.6"/><rect x="30.8" y="1053.6" width="32.6" height="10.2" rx="5.1" fill="#555a65" stroke="#141923" stroke-width="1.2"/><path d="M58.3,1053.6 A5.1,5.1 0 0 0 58.3,1063.8" fill="none" stroke="#141923" stroke-width="1.2"/><path d="M31.5,1116.3H61.7M31.5,1127.3H61.7M31.5,1138.6H55" stroke="#555a65" stroke-width="4.2"/><circle cx="63.4" cy="1138.2" r="9.6" fill="#555a65" stroke="#141923" stroke-width="1.5"/><path d="M58,1138.2H68.8M63.4,1132.8V1143.6" stroke="#141923" stroke-width="1.2"/><g transform="translate(153.5,72) scale(1.0,1.0)"><rect x="0.5" y="0.5" width="33" height="33" fill="#e4e4e4" stroke="#777" stroke-width="1"/><path d="M7.5,4V21M17,4V21M27,4V21" stroke="#707070" stroke-width="1.5"/><ellipse cx="7.5" cy="13.5" rx="3.5" ry="1.8" fill="#f5e04e" stroke="#85792a" stroke-width="0.8"/><ellipse cx="17" cy="9" rx="3.5" ry="1.8" fill="#f5e04e" stroke="#85792a" stroke-width="0.8"/><ellipse cx="27" cy="16.5" rx="3.5" ry="1.8" fill="#f5e04e" stroke="#85792a" stroke-width="0.8"/><circle cx="7.5" cy="27" r="2.8" fill="#f24b4b" stroke="#8f2a2a" stroke-width="0.8"/><circle cx="17" cy="27" r="2.8" fill="#5fd35f" stroke="#2f7a2f" stroke-width="0.8"/><circle cx="27" cy="27" r="2.8" fill="#f24b4b" stroke="#8f2a2a" stroke-width="0.8"/></g><path d="M171,153.6 C182,153.6 189,160 189,168 C189,174 184,175 181,174 C178,173 176,175 177,179 C178,184 175,188.4 169,188.4 C159,188.4 152.5,180 152.5,171 C152.5,161 160,153.6 171,153.6 Z" fill="#fbbf57" stroke="#b06a1a" stroke-width="1.3"/><circle cx="164" cy="161" r="2.3" fill="#f04848" stroke="#8a2020" stroke-width="0.8"/><circle cx="172.5" cy="162" r="2.3" fill="#f7e14e" stroke="#85792a" stroke-width="0.8"/><circle cx="180" cy="167" r="1.8" fill="#fff" stroke="#777" stroke-width="0.8"/><circle cx="177" cy="175.5" r="3.2" fill="#5ad4f7" stroke="#2a7890" stroke-width="0.8"/><path d="M153,242.5H189" stroke="#e6e6e6" stroke-width="2"/><path d="M171,235.6 L178,242.5 L171,249.4 L164,242.5 Z" fill="#e6e6e6" stroke="#777" stroke-width="0.8"/><rect x="157.5" y="256.2" width="27" height="14.1" fill="#fafafa" stroke="#777" stroke-width="1"/><text x="171" y="267.6" font-family="Liberation Mono" font-size="13" fill="#555" text-anchor="middle" textLength="22" lengthAdjust="spacingAndGlyphs">REL</text><rect x="154" y="317" width="9" height="7" fill="#aaa"/><rect x="153" y="323" width="11" height="13" rx="3" fill="#e3e3e3" stroke="#777" stroke-width="1"/><path d="M158.5,336 V344 Q158.5,351 165,350 Q172,349 174,344" fill="none" stroke="#999" stroke-width="1.2"/><path d="M182,326 L168,344 H175.5 L171,356 L188,336 H180.5 L187,326 Z" fill="#f7e14e" stroke="#85792a" stroke-width="0.8"/><path d="M159.5,399 H182.5 V434 L178.5,429 L174.5,434 L170.5,429 L166.5,434 L162.5,429 L159.5,433 Z" fill="#fafafa" stroke="#777" stroke-width="1"/><path d="M163.5,406H178.5M163.5,411H178.5M163.5,416H178.5M163.5,421H178.5" stroke="#666" stroke-width="1.2"/><path d="M155,482.5H169V497H155Z" fill="#73e07a" stroke="#3a8a3d" stroke-width="0.8"/><path d="M171,482.5H188.5V497H171Z" fill="#f7e14e" stroke="#85792a" stroke-width="0.8"/><path d="M154,497H171V514H154Z" fill="#fd5656" stroke="#9a2a2a" stroke-width="0.8"/><path d="M171,497H188.5V514H171Z" fill="#5fd8f8" stroke="#2f6f85" stroke-width="0.8"/><circle cx="169" cy="489.5" r="3" fill="#73e07a"/><circle cx="179.5" cy="497" r="3" fill="#f7e14e"/><circle cx="163" cy="497" r="3" fill="#73e07a"/><circle cx="171" cy="506" r="3" fill="#fd5656"/><g transform="translate(877.4,142.4) scale(0.7705882352941176,0.78125)"><rect x="7" y="0.5" width="21" height="16" fill="#fff" stroke="#6a6a6a" stroke-width="1"/><path d="M11,4.5H24M13,8H24" stroke="#777" stroke-width="1.5"/><path d="M0.5,10 L9,10 L11,14.5 L33.5,14.5 L29.5,31.5 L4,31.5 Z" fill="#fdea5c" stroke="#8a7d2a" stroke-width="1"/></g><g transform="translate(877.4,186) scale(0.7705882352941176,0.78125)"><rect x="7" y="0.5" width="21" height="16" fill="#fff" stroke="#6a6a6a" stroke-width="1"/><path d="M11,4.5H24M13,8H24" stroke="#777" stroke-width="1.5"/><path d="M0.5,10 L9,10 L11,14.5 L33.5,14.5 L29.5,31.5 L4,31.5 Z" fill="#fdea5c" stroke="#8a7d2a" stroke-width="1"/></g><g transform="translate(837.3,185.2) scale(0.8624999999999999,0.8633333333333333)" fill="#51565f"><path d="M9,3 C9,0 15,0 15,3" fill="none" stroke="#51565f" stroke-width="1.2"/><rect x="1" y="4" width="22" height="4" rx="1"/><path d="M2.5,9 H21.5 V28 Q21.5,30 19.5,30 H4.5 Q2.5,30 2.5,28 Z"/><path d="M7.5,12V26M12,12V26M16.5,12V26" stroke="#141923" stroke-width="1.6" opacity="0.7"/></g><rect x="432.5" y="308.5" width="22" height="20" fill="#fafafa" stroke="#777" stroke-width="1"/><path d="M432.5,313H454.5" stroke="#777" stroke-width="1"/><path d="M434.5,310.8H440" stroke="#777" stroke-width="1" stroke-dasharray="1.2,1"/><path d="M436,316 L447,326 M436,316 V321 M436,316 H441 M447,326 H442 M447,326 V321" fill="none" stroke="#e0c830" stroke-width="2.2"/><circle cx="452.5" cy="327.5" r="6.5" fill="#5ad4f7" stroke="#2a7890" stroke-width="0.8"/><path d="M449.5,327.5 A3.2,3.2 0 1 0 452.5,324.3" fill="none" stroke="#1d5f73" stroke-width="1"/><path d="M586,308.6 L595,330 H577 Z" fill="#4d525c"/><circle cx="597" cy="328" r="6" fill="#4d525c" stroke="#252a39" stroke-width="1"/><path d="M586,315V323M586,326V328" stroke="#2a2e3a" stroke-width="1.3"/><g transform="translate(687.6,432.7) scale(0.9583333333333334,0.8666666666666667)" fill="#e6e6e6"><path d="M9,3 C9,0 15,0 15,3" fill="none" stroke="#e6e6e6" stroke-width="1.2"/><rect x="1" y="4" width="22" height="4" rx="1"/><path d="M2.5,9 H21.5 V28 Q21.5,30 19.5,30 H4.5 Q2.5,30 2.5,28 Z"/><path d="M7.5,12V26M12,12V26M16.5,12V26" stroke="#8a8a8a" stroke-width="1.6" opacity="0.7"/></g><path d="M1327,82 L1336,92 L1356,70" fill="none" stroke="#4e535d" stroke-width="6"/><g transform="translate(1319.8,116.7) scale(1.0250000000000001,1.0033333333333334)" fill="#4e535d"><path d="M9,3 C9,0 15,0 15,3" fill="none" stroke="#4e535d" stroke-width="1.2"/><rect x="1" y="4" width="22" height="4" rx="1"/><path d="M2.5,9 H21.5 V28 Q21.5,30 19.5,30 H4.5 Q2.5,30 2.5,28 Z"/><path d="M7.5,12V26M12,12V26M16.5,12V26" stroke="#141923" stroke-width="1.6" opacity="0.7"/></g><path d="M1313.5,168 H1336.5 L1340.5,172 V198.2 H1313.5 Z" fill="#fafafa" stroke="#888" stroke-width="0.8"/><circle cx="1331.5" cy="177.5" r="4" fill="none" stroke="#7a8a90" stroke-width="2.2" stroke-dasharray="1.6,1.2"/><circle cx="1331.5" cy="177.5" r="2" fill="none" stroke="#7a8a90" stroke-width="1"/><circle cx="1321" cy="185" r="4" fill="none" stroke="#7a8a90" stroke-width="2.2" stroke-dasharray="1.6,1.2"/><circle cx="1321" cy="185" r="2" fill="none" stroke="#7a8a90" stroke-width="1"/><circle cx="1336.5" cy="190.5" r="7.5" fill="#5ad4f7" stroke="#2a7890" stroke-width="0.8"/><path d="M1333,190.5 A3.8,3.8 0 1 0 1336.5,186.7" fill="none" stroke="#1d5f73" stroke-width="1.2"/></svg>
</body></html>
